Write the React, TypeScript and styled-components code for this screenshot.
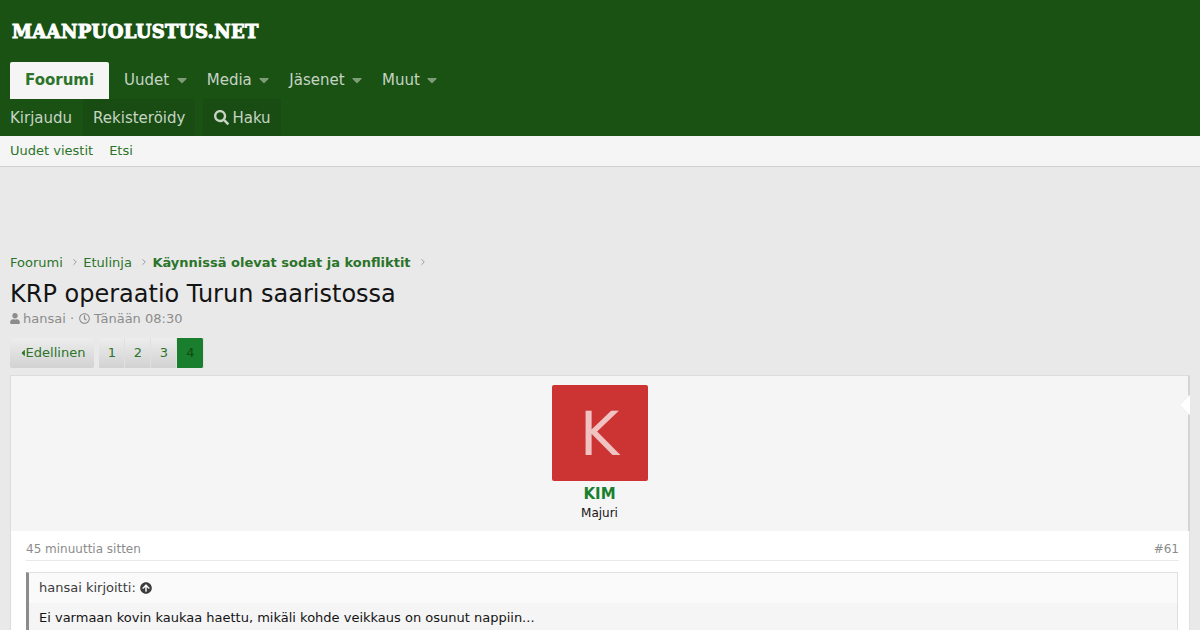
import React from 'react';
import styled, { createGlobalStyle } from 'styled-components';
import { ChevronRight } from 'lucide-react';
import { FaArrowCircleUp, FaCaretDown, FaCaretLeft, FaRegClock, FaSearch, FaUser } from 'react-icons/fa';

const Global = createGlobalStyle`
    html, body {
        margin: 0;
        padding: 0;
        height: 630px;
        overflow: hidden;
        background: #e9e9e9;
        font-family: 'DejaVu Sans', sans-serif;
        font-size: 13px;
        color: #141414;
    }
`;

const Header = styled.header`
    background: #1a5214;
    height: 136px;
    overflow: hidden;
`;

const Logo = styled.div`
    height: 62px;
    padding-left: 12px;
    display: flex;
    align-items: center;
    font-family: 'DejaVu Serif', serif;
    font-weight: 700;
    font-size: 18px;
    letter-spacing: 0.35px;
    color: #fff;
    -webkit-text-stroke: 1px #fff;
`;

const Nav = styled.nav`
    height: 37px;
    padding-left: 10px;
    display: flex;
`;

const Tab = styled.a`
    height: 35px;
    padding: 0 15px 2px;
    margin-right: 5px;
    display: flex;
    align-items: center;
    font-size: 15px;
    font-weight: 700;
    color: #2b742a;
    background: #f5f5f5;
    border-radius: 2px 2px 0 0;
`;

const NavLink = styled.a`
    height: 35px;
    padding: 0 10px 2px;
    display: flex;
    align-items: center;
    font-size: 15px;
    color: #c6d4c4;
    svg {
        margin-left: 7.5px;
        width: 10px;
        height: 16px;
        color: #7f9c79;
    }
`;

const UserRow = styled.div`
    height: 37px;
    display: flex;
`;

const UserLink = styled.a<{ $first?: boolean; $gap?: boolean }>`
    height: 37px;
    display: flex;
    align-items: center;
    gap: 3px;
    font-size: 15px;
    color: #c6d4c4;
    padding: 0 ${(p) => (p.$first ? '11px 0 10px' : '10px')};
    margin-left: ${(p) => (p.$gap ? '8px' : '0')};
    background: ${(p) => (p.$first ? 'transparent' : '#184c12')};
    border-radius: 2px;
    svg {
        width: 15px;
        height: 15px;
        margin-left: 1px;
    }
`;

const SubNav = styled.div`
    height: 28px;
    padding: 0 0 2px 10px;
    display: flex;
    align-items: center;
    gap: 16px;
    background: #f5f5f5;
    border-bottom: 1px solid #cfcfcf;
    a {
        color: #2b742a;
    }
`;

const Body = styled.main`
    padding: 85px 10px 0;
`;

const Crumbs = styled.div`
    height: 20px;
    display: flex;
    align-items: center;
    color: #2b742a;
    svg {
        width: 10px;
        height: 10px;
        margin: 0 3.5px 0 7px;
        color: #8c8c8c;
    }
`;

const CrumbCurrent = styled.b`
    font-weight: 700;
`;

const Title = styled.h1`
    margin: 8px 0 0;
    font-size: 24px;
    line-height: 28px;
    font-weight: 400;
    color: #141414;
`;

const Meta = styled.div`
    height: 20px;
    display: flex;
    align-items: center;
    color: #8c8c8c;
    svg {
        width: 10px;
        height: 11px;
        margin-right: 3px;
    }
`;

const MetaDate = styled.span`
    display: flex;
    align-items: center;
    margin-left: 5px;
    svg {
        width: 11px;
        margin-right: 4px;
    }
`;

const Pager = styled.div`
    margin-top: 10px;
    display: flex;
    height: 30px;
`;

const PageButton = styled.a<{ $current?: boolean }>`
    box-sizing: border-box;
    width: ${(p) => (p.$current ? '27px' : '26px')};
    height: 30px;
    padding: 0 0 1px 1px;
    display: flex;
    align-items: center;
    justify-content: center;
    color: ${(p) => (p.$current ? '#0f4a10' : '#2b742a')};
    background: ${(p) => (p.$current ? '#197f2f' : 'linear-gradient(#ededed, #d2d2d2)')};
    border-right: 1px solid #e0e0e0;
    border-radius: ${(p) => (p.$current ? '0 2px 2px 0' : '0')};
`;

const PrevButton = styled(PageButton)`
    width: 84px;
    margin-right: 5px;
    border-radius: 2px;
    border-right: 0;
    svg {
        width: 6px;
        height: 10px;
    }
`;

const Post = styled.article`
    position: relative;
    margin-top: 7px;
    background: #fff;
    border: 1px solid #dcdcdc;
    border-right: 0;
    border-bottom: 0;
`;

const UserCell = styled.div`
    height: 155px;
    padding-top: 9px;
    box-sizing: border-box;
    background: #f5f5f5;
    border-right: 2px solid #d4d4d4;
    display: flex;
    flex-direction: column;
    align-items: center;
`;

const Avatar = styled.div`
    width: 96px;
    height: 96px;
    padding-top: 2px;
    box-sizing: border-box;
    display: flex;
    align-items: center;
    justify-content: center;
    background: #cc3333;
    color: #f0c2c2;
    font-size: 60px;
    border-radius: 2px;
`;

const UserName = styled.div`
    margin-top: 4px;
    font-size: 15px;
    line-height: 19px;
    font-weight: 700;
    color: #197f2f;
`;

const UserTitle = styled.div`
    font-size: 12px;
    line-height: 19px;
    color: #141414;
`;

const Pointer = styled.span`
    position: absolute;
    right: 0;
    top: 19px;
    border: 10px solid transparent;
    border-left-width: 0;
    border-right: 10px solid #fff;
    filter: drop-shadow(-1px 0 0 #eeeeee);
`;

const Content = styled.div`
    padding: 0 11px 0 15px;
    border-right: 1px solid #e0e0e0;
`;

const Attribution = styled.div`
    box-sizing: border-box;
    height: 30px;
    padding-top: 6px;
    margin-right: -1px;
    display: flex;
    align-items: center;
    justify-content: space-between;
    font-size: 12px;
    color: #8c8c8c;
    border-bottom: 1px solid #e8e8e8;
`;

const Quote = styled.blockquote`
    margin: 11px 0 0;
    background: #f5f5f5;
    border: 1px solid #e0e0e0;
    border-left: 3px solid #8c8c8c;
`;

const QuoteHead = styled.div`
    height: 29px;
    padding: 0 0 1px 10px;
    display: flex;
    align-items: center;
    gap: 4px;
    background: #fafafa;
    color: #3c3c3c;
    svg {
        width: 12px;
        height: 12px;
    }
`;

const QuoteText = styled.div`
    padding: 5px 10px 10px;
    line-height: 19px;
`;

const App = () => (
    <>
        <Global />
        <Header>
            <Logo>MAANPUOLUSTUS.NET</Logo>
            <Nav>
                <Tab>Foorumi</Tab>
                <NavLink>Uudet<FaCaretDown /></NavLink>
                <NavLink>Media<FaCaretDown /></NavLink>
                <NavLink>Jäsenet<FaCaretDown /></NavLink>
                <NavLink>Muut<FaCaretDown /></NavLink>
            </Nav>
            <UserRow>
                <UserLink $first>Kirjaudu</UserLink>
                <UserLink>Rekisteröidy</UserLink>
                <UserLink $gap><FaSearch />Haku</UserLink>
            </UserRow>
        </Header>
        <SubNav>
            <a>Uudet viestit</a>
            <a>Etsi</a>
        </SubNav>
        <Body>
            <Crumbs>
                Foorumi<ChevronRight />Etulinja<ChevronRight />
                <CrumbCurrent>Käynnissä olevat sodat ja konfliktit</CrumbCurrent>
                <ChevronRight />
            </Crumbs>
            <Title>KRP operaatio Turun saaristossa</Title>
            <Meta>
                <FaUser />hansai ·
                <MetaDate><FaRegClock />Tänään 08:30</MetaDate>
            </Meta>
            <Pager>
                <PrevButton><FaCaretLeft />Edellinen</PrevButton>
                <PageButton>1</PageButton>
                <PageButton>2</PageButton>
                <PageButton>3</PageButton>
                <PageButton $current>4</PageButton>
            </Pager>
            <Post>
                <UserCell>
                    <Avatar>K</Avatar>
                    <UserName>KIM</UserName>
                    <UserTitle>Majuri</UserTitle>
                </UserCell>
                <Pointer />
                <Content>
                    <Attribution>
                        <span>45 minuuttia sitten</span>
                        <span>#61</span>
                    </Attribution>
                    <Quote>
                        <QuoteHead>hansai kirjoitti: <FaArrowCircleUp /></QuoteHead>
                        <QuoteText>Ei varmaan kovin kaukaa haettu, mikäli kohde veikkaus on osunut nappiin...</QuoteText>
                    </Quote>
                </Content>
            </Post>
        </Body>
    </>
);

export default App;
